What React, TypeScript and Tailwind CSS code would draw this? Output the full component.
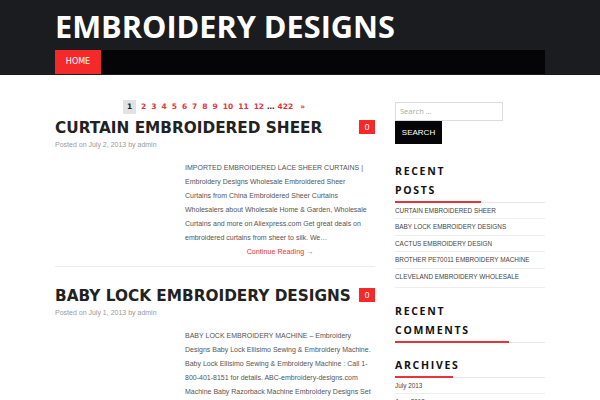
import React from "react";

const pages = ["2", "3", "4", "5", "6", "7", "8", "9", "10", "11", "12"];
const recent = [
  "CURTAIN EMBROIDERED SHEER",
  "BABY LOCK EMBROIDERY DESIGNS",
  "CACTUS EMBROIDERY DESIGN",
  "BROTHER PE70011 EMBROIDERY MACHINE",
  "CLEVELAND EMBROIDERY WHOLESALE",
];

function Post({
  title,
  date,
  lines,
  more,
}: {
  title: string;
  date: string;
  lines: string[];
  more: boolean;
}) {
  return (
    <article>
      <div className="flex items-start justify-between">
        <h2
          className="text-[15.3px] leading-[20px] font-bold text-[#222]"
          style={{ fontFamily: '"DejaVu Sans", sans-serif' }}
        >
          {title}
        </h2>
        <span className="mt-[2px] flex h-[14px] w-[16px] items-center justify-center bg-[#f42a2a] text-[8.5px] text-white font-['Liberation_Sans',sans-serif]">
          0
        </span>
      </div>
      <div className="mt-[2px] text-[7px] leading-[10px] text-[#9a9a9a] font-['Liberation_Sans',sans-serif]">
        Posted on {date} by admin
      </div>
      <div className="mt-[11px] pl-[130px]">
        <p className="text-[7px] leading-[14px] text-[#555] font-['Liberation_Sans',sans-serif] whitespace-nowrap">
          {lines.map((l, i) => (
            <React.Fragment key={i}>
              {l}
              {i < lines.length - 1 && <br />}
            </React.Fragment>
          ))}
        </p>
        {more && (
          <div className="text-center text-[7.2px] leading-[14px] text-[#e8333a] font-['Liberation_Sans',sans-serif]">
            Continue Reading →
          </div>
        )}
      </div>
    </article>
  );
}

function WidgetTitle({ lines, red }: { lines: string[]; red: string }) {
  return (
    <div>
      <h3 className="font-['Open_Sans',sans-serif] text-[10.5px] font-bold leading-[19px] tracking-[1.7px] text-[#111]">
        {lines.map((l) => (
          <div key={l}>{l}</div>
        ))}
      </h3>
      <div className="relative mt-[2px] h-[1px] bg-[#e6e6e6]">
        <div className={`absolute left-0 top-[-1px] h-[2px] bg-[#e8333a] ${red}`} />
      </div>
    </div>
  );
}

export default function App() {
  return (
    <div className="h-[400px] w-[600px] overflow-hidden bg-white">
      <header className="h-[75px] bg-[#1b1c20]">
        <div className="mx-auto w-[490px]">
          <div className="h-[50px] pt-[8px]">
            <h1 className="font-['Open_Sans',sans-serif] text-[30.7px] font-bold leading-[36px] text-white">
              EMBROIDERY DESIGNS
            </h1>
          </div>
          <nav className="flex h-[24px] bg-[#050507]">
            <a className="flex h-full w-[46px] items-center justify-center bg-[#f42a2a] font-['DejaVu_Sans',sans-serif] text-[8px] text-white">
              HOME
            </a>
          </nav>
        </div>
      </header>

      <div className="mx-auto flex w-[490px] gap-[20px]">
        <main className="w-[320px]">
          <div className="mt-[25px] flex items-center pl-[68px] font-['DejaVu_Sans',sans-serif] text-[7.5px] font-bold">
            <span className="flex h-[14px] w-[13px] items-center justify-center bg-[#e2e2e2] text-[#222]">
              1
            </span>
            {pages.map((p) => (
              <span key={p} className="ml-[5px] text-[#e8333a]">
                {p}
              </span>
            ))}
            <span className="ml-[3px] text-[#222]">…</span>
            <span className="ml-[3px] text-[#e8333a]">422</span>
            <span className="ml-[7px] text-[#e8333a]">»</span>
          </div>
          <div className="mt-[4px]">
            <Post
              title="CURTAIN EMBROIDERED SHEER"
              date="July 2, 2013"
              more
              lines={[
                "IMPORTED EMBROIDERED LACE SHEER CURTAINS |",
                "Embroidery Designs Wholesale Embroidered Sheer",
                "Curtains from China Embroidered Sheer Curtains",
                "Wholesalers about Wholesale Home & Garden, Wholesale",
                "Curtains and more on Aliexpress.com Get great deals on",
                "embroidered curtains from sheer to silk. We…",
              ]}
            />
          </div>
          <div className="mt-[7px] h-[1px] bg-[#ececec]" />
          <div className="mt-[19px]">
            <Post
              title="BABY LOCK EMBROIDERY DESIGNS"
              date="July 1, 2013"
              more={false}
              lines={[
                "BABY LOCK EMBROIDERY MACHINE – Embroidery",
                "Designs Baby Lock Ellisimo Sewing & Embroidery Machine.",
                "Baby Lock Ellisimo Sewing & Embroidery Machine : Call 1-",
                "800-401-8151 for details. ABC-embroidery-designs.com",
                "Machine Baby Razorback Machine Embroidery Designs Set",
                "of 10 HOOP SIZE 4 x…",
              ]}
            />
          </div>
        </main>

        <aside className="w-[150px]">
          <div className="mt-[27px]">
            <div className="h-[19px] w-[108px] border border-[#dcdcdc] bg-white pl-[4px] font-['Open_Sans',sans-serif] text-[7.5px] leading-[17px] text-[#aaa]">
              Search …
            </div>
            <button className="block h-[23px] w-[47px] bg-[#050507] font-['Liberation_Sans',sans-serif] text-[8px] text-white">
              SEARCH
            </button>
          </div>
          <div className="mt-[18px]">
            <WidgetTitle lines={["RECENT", "POSTS"]} red="w-[86px]" />
            <ul className="font-['Liberation_Sans',sans-serif] text-[6.4px] text-[#444]">
              {recent.map((r, i) => (
                <li
                  key={r}
                  className={`flex h-[16.4px] items-center ${i < recent.length - 1 ? "border-b border-[#eeeeee]" : ""}`}
                >
                  {r}
                </li>
              ))}
            </ul>
            <div className="mt-[2px] h-[1px] bg-[#eeeeee]" />
          </div>
          <div className="mt-[14px]">
            <WidgetTitle lines={["RECENT", "COMMENTS"]} red="w-[114px]" />
          </div>
          <div className="mt-[13px]">
            <WidgetTitle lines={["ARCHIVES"]} red="w-[58px]" />
            <ul className="font-['Liberation_Sans',sans-serif] text-[6.4px] text-[#444]">
              <li className="flex h-[16px] items-center border-b border-[#eeeeee]">July 2013</li>
              <li className="flex h-[16px] items-center">June 2013</li>
            </ul>
          </div>
        </aside>
      </div>
    </div>
  );
}
